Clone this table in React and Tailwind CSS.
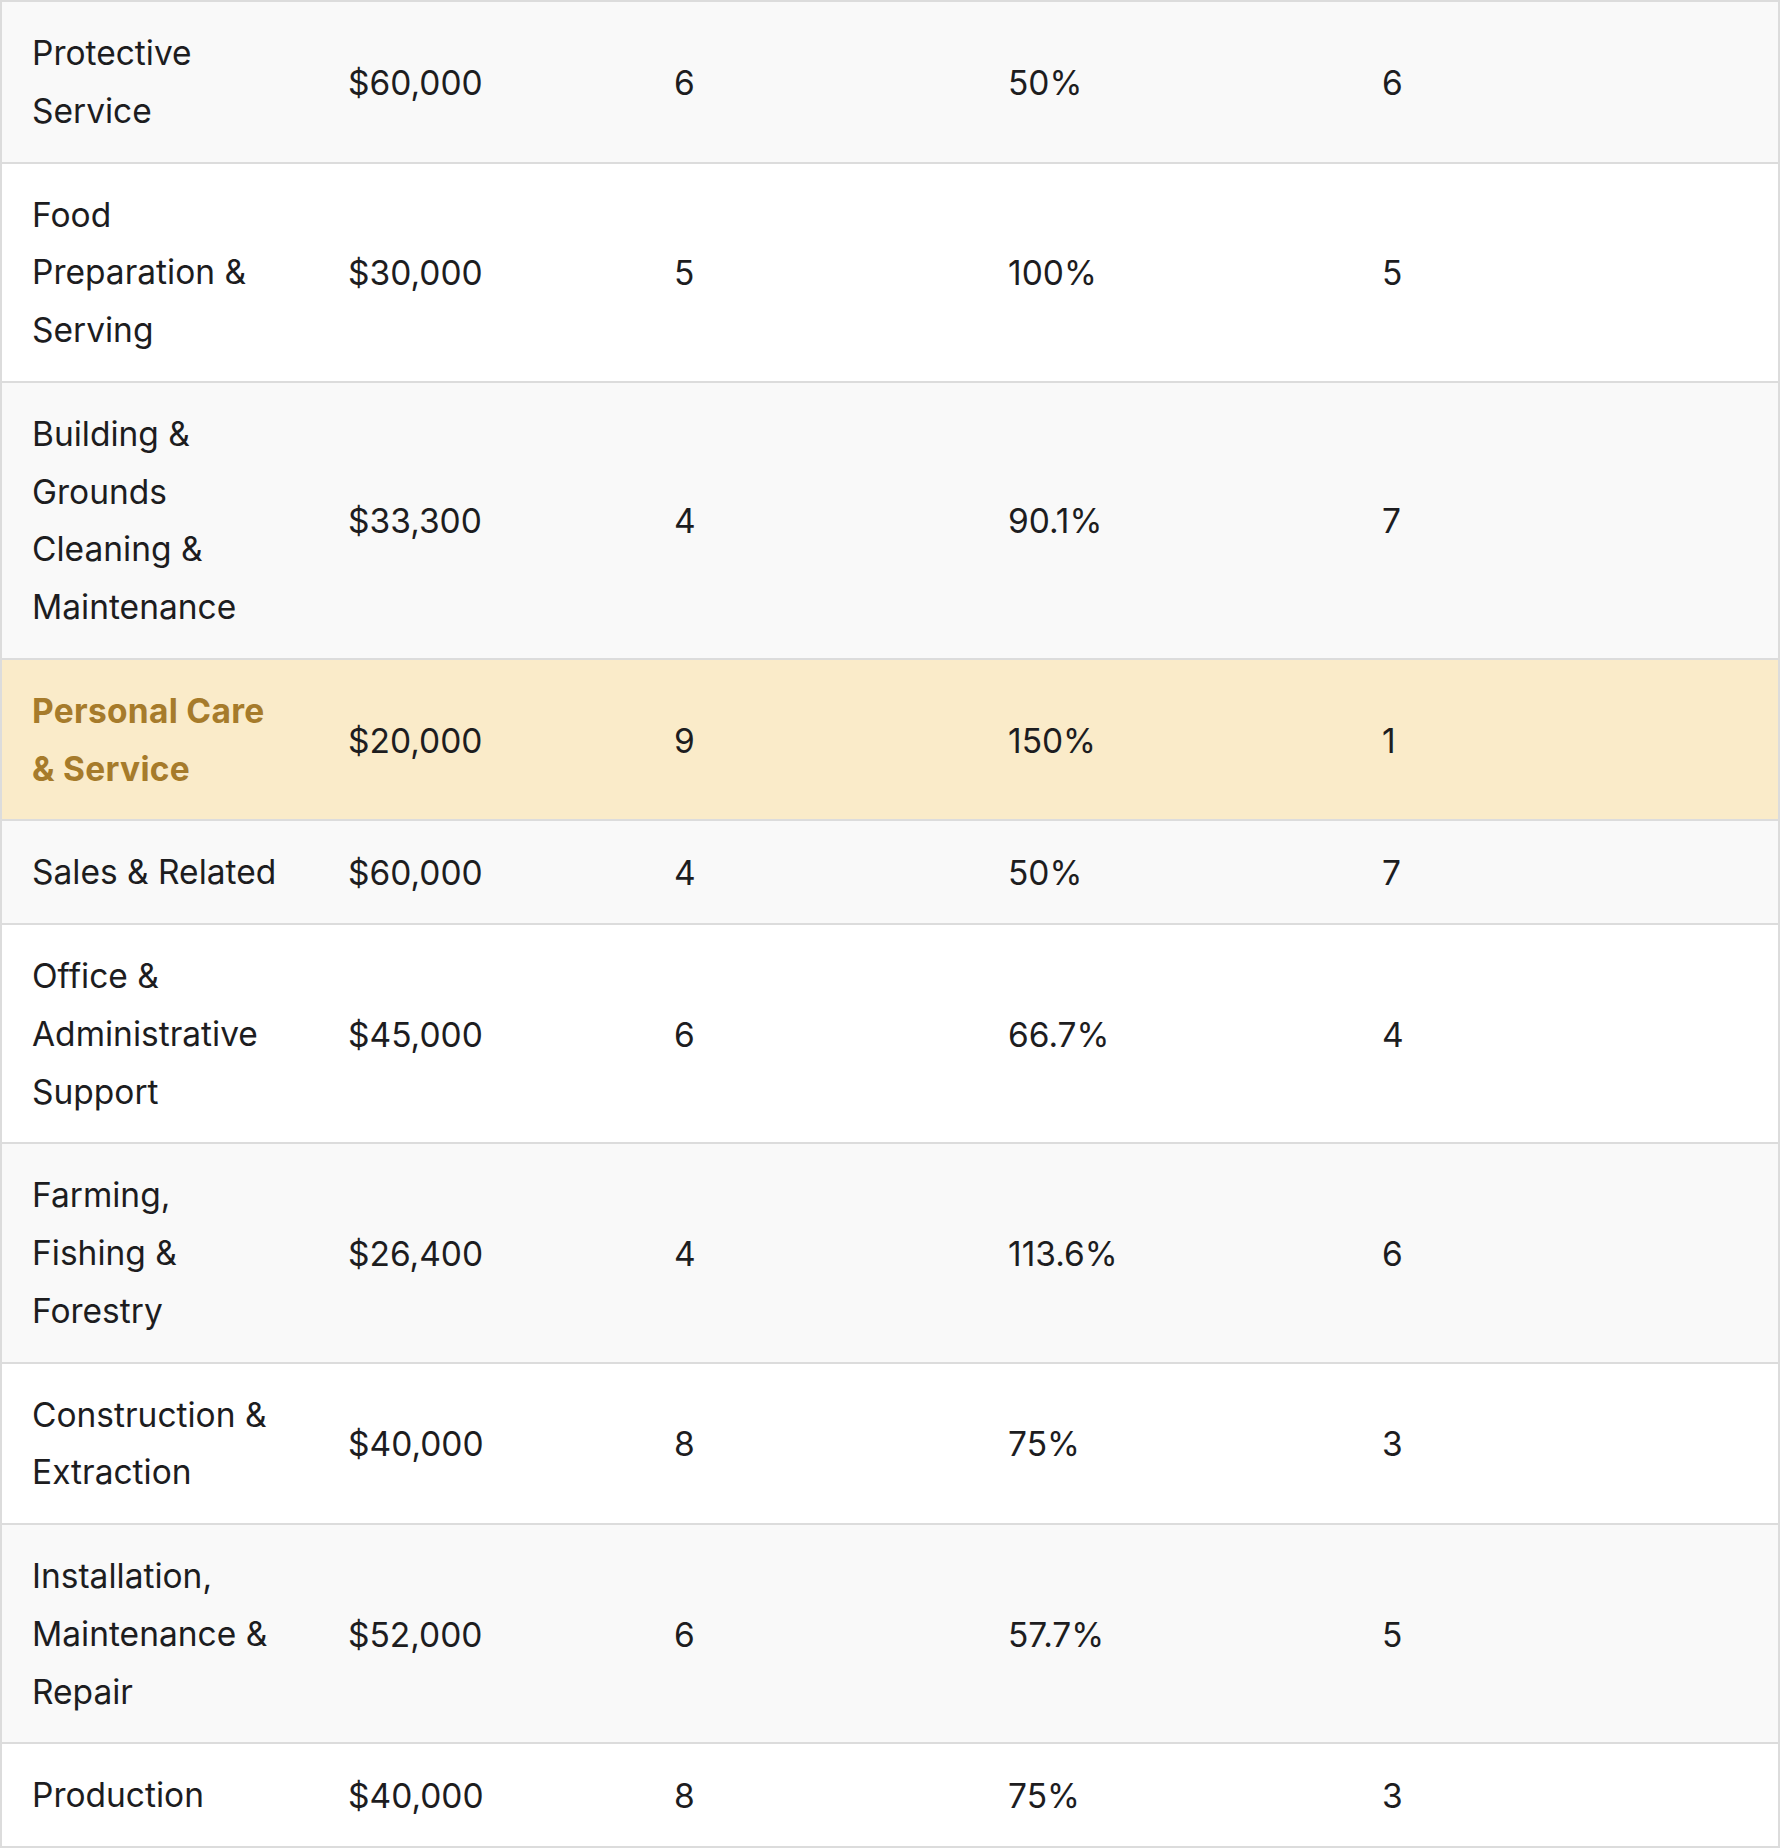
const rows = [
  { name: ["Protective", "Service"], salary: "$60,000", score: 6, growth: "50%", rank: 6 },
  { name: ["Food", "Preparation &", "Serving"], salary: "$30,000", score: 5, growth: "100%", rank: 5 },
  { name: ["Building &", "Grounds", "Cleaning &", "Maintenance"], salary: "$33,300", score: 4, growth: "90.1%", rank: 7 },
  { name: ["Personal Care", "& Service"], salary: "$20,000", score: 9, growth: "150%", rank: 1, highlight: true },
  { name: ["Sales & Related"], salary: "$60,000", score: 4, growth: "50%", rank: 7 },
  { name: ["Office &", "Administrative", "Support"], salary: "$45,000", score: 6, growth: "66.7%", rank: 4 },
  { name: ["Farming,", "Fishing &", "Forestry"], salary: "$26,400", score: 4, growth: "113.6%", rank: 6 },
  { name: ["Construction &", "Extraction"], salary: "$40,000", score: 8, growth: "75%", rank: 3 },
  { name: ["Installation,", "Maintenance &", "Repair"], salary: "$52,000", score: 6, growth: "57.7%", rank: 5 },
  { name: ["Production"], salary: "$40,000", score: 8, growth: "75%", rank: 3 },
];

export default function App() {
  return (
    <div className="bg-white" style={{ fontFamily: "Inter, 'Noto Sans', sans-serif" }}>
      <table className="w-[1780px] table-fixed border-collapse border-2 border-[#dcdcdc] text-[33.5px] leading-[57.75px] text-[#1d1d1f]">
        <colgroup>
          <col className="w-[316px]" />
          <col className="w-[326px]" />
          <col className="w-[334px]" />
          <col className="w-[374px]" />
          <col />
        </colgroup>
        <tbody>
          {rows.map((row, i) => (
            <tr
              key={i}
              className={
                "border-b-2 border-[#dcdcdc] " +
                (row.highlight ? "bg-[#faebc9]" : i % 2 === 0 ? "bg-[#f9f9f9]" : "bg-white")
              }
            >
              {/* occupation */}
              <td className={"pt-[23px] pb-[21px] pl-[30px] pr-2 align-middle " + (row.highlight ? "font-bold tracking-[0.3px] text-[#a67b2b]" : "")}>
                {row.name.map((line, j) => (
                  <span key={j} className="block whitespace-nowrap">{line}</span>
                ))}
              </td>
              <td className="pt-[24px] pb-[20px] pl-[31px] align-middle">{row.salary}</td>
              <td className="pt-[24px] pb-[20px] pl-[31px] align-middle">{row.score}</td>
              <td className="pt-[24px] pb-[20px] pl-[31px] align-middle">{row.growth}</td>
              <td className="pt-[24px] pb-[20px] pl-[31px] align-middle">{row.rank}</td>
            </tr>
          ))}
        </tbody>
      </table>
    </div>
  );
}
